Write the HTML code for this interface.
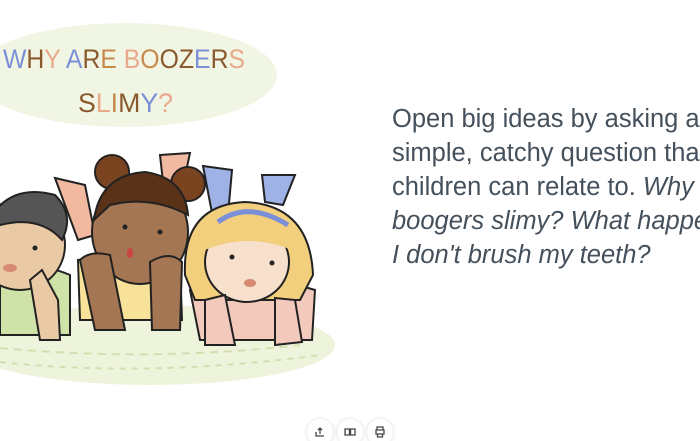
<!DOCTYPE html>
<html><head><meta charset="utf-8"><style>
html,body{margin:0;padding:0;background:#fff;width:700px;height:441px;overflow:hidden;position:relative}
.wrap{position:absolute;left:0;top:0;width:700px;height:441px;overflow:hidden}
.txt{position:absolute;left:392px;top:102px;width:308px;overflow:hidden;font-family:"Liberation Sans",sans-serif;font-size:25.5px;line-height:34px;color:#44505b;white-space:nowrap}
.txt i{font-style:italic}
.btn{position:absolute;top:419px;width:26px;height:26px;border-radius:50%;background:#fff;box-shadow:0 0 4px rgba(0,0,0,.15);}
.btn svg{position:absolute;left:7px;top:7px}
</style></head><body><div class="wrap">
<svg width="350" height="441" style="position:absolute;left:0;top:0" xmlns="http://www.w3.org/2000/svg">
<ellipse cx="125" cy="75" rx="152" ry="52" fill="#f1f5e3"/>
<text x="3" y="68" textLength="242" lengthAdjust="spacingAndGlyphs" font-family="Liberation Sans,sans-serif" font-size="27" fill="#7b8fd8">W<tspan fill="#8a5a2e">H</tspan><tspan fill="#e8a98d">Y</tspan> <tspan fill="#7b8fd8">A</tspan><tspan fill="#8a5a2e">R</tspan><tspan fill="#c68a4d">E</tspan> <tspan fill="#e8a98d">B</tspan><tspan fill="#c68a4d">O</tspan><tspan fill="#8a5a2e">O</tspan><tspan fill="#8a5a2e">Z</tspan><tspan fill="#7b8fd8">E</tspan><tspan fill="#8a5a2e">R</tspan><tspan fill="#e8a98d">S</tspan></text>
<text x="78" y="112" textLength="95" lengthAdjust="spacingAndGlyphs" font-family="Liberation Sans,sans-serif" font-size="27" fill="#8a5a2e">S<tspan fill="#e8a98d">L</tspan><tspan fill="#c68a4d">I</tspan><tspan fill="#8a5a2e">M</tspan><tspan fill="#7b8fd8">Y</tspan><tspan fill="#e8a98d">?</tspan></text>
<!-- rug -->
<ellipse cx="150" cy="345" rx="185" ry="40" fill="#eef3dc"/>
<path d="M0 348 Q150 362 300 345" stroke="#d4dfb0" stroke-width="2" stroke-dasharray="8 6" fill="none"/>
<path d="M0 362 Q150 378 320 355" stroke="#d4dfb0" stroke-width="2" stroke-dasharray="6 6" fill="none"/>
<!-- legs -->
<path d="M55 178 L85 185 L95 235 L78 240 Z" fill="#f0b9a0" stroke="#222" stroke-width="2"/>
<path d="M160 155 L190 153 L180 200 L165 200 Z" fill="#f0b9a0" stroke="#222" stroke-width="2"/>
<path d="M203 166 L232 170 L228 215 L212 213 Z" fill="#9fb2e6" stroke="#222" stroke-width="2"/>
<path d="M262 175 L295 175 L283 205 L265 202 Z" fill="#9fb2e6" stroke="#222" stroke-width="2"/>
<!-- left kid -->
<path d="M0 270 Q35 260 70 275 L70 335 L0 335 Z" fill="#cfe2a8" stroke="#222" stroke-width="2"/>
<circle cx="20" cy="245" r="45" fill="#eac9a5" stroke="#222" stroke-width="2"/>
<path d="M-20 240 Q0 180 55 195 Q75 215 62 240 Q40 215 0 225 Z" fill="#555" stroke="#222" stroke-width="2"/>
<path d="M30 280 L42 270 L58 300 L60 340 L40 340 Z" fill="#eac9a5" stroke="#222" stroke-width="2"/>
<circle cx="35" cy="248" r="2.5" fill="#222"/>
<ellipse cx="10" cy="268" rx="7" ry="4" fill="#d98a75"/>
<!-- middle kid -->
<path d="M78 260 Q130 250 180 262 L182 320 L80 320 Z" fill="#f8e29a" stroke="#222" stroke-width="2"/>
<circle cx="112" cy="172" r="17" fill="#7a4420" stroke="#222" stroke-width="2"/>
<circle cx="188" cy="184" r="17" fill="#7a4420" stroke="#222" stroke-width="2"/>
<ellipse cx="140" cy="232" rx="48" ry="52" fill="#a57653" stroke="#222" stroke-width="2"/>
<path d="M94 220 Q100 175 145 172 Q185 178 188 215 Q150 195 110 205 Z" fill="#5a3218" stroke="#222" stroke-width="2"/>
<circle cx="125" cy="227" r="2.5" fill="#222"/><circle cx="160" cy="232" r="2.5" fill="#222"/>
<ellipse cx="130" cy="253" rx="3" ry="5" fill="#c44"/>
<path d="M80 260 Q90 250 110 255 L125 330 L95 330 Z" fill="#a57653" stroke="#222" stroke-width="2"/>
<path d="M150 262 Q170 250 182 262 L180 330 L152 330 Z" fill="#a57653" stroke="#222" stroke-width="2"/>
<!-- right kid -->
<path d="M190 290 Q250 270 315 290 L312 340 L200 340 Z" fill="#f3c9bb" stroke="#222" stroke-width="2"/>
<path d="M185 275 Q182 205 245 202 Q310 205 313 275 L300 300 L195 300 Z" fill="#f2cf7c" stroke="#222" stroke-width="2"/>
<ellipse cx="247" cy="262" rx="42" ry="40" fill="#f7e0cc" stroke="#222" stroke-width="2"/>
<path d="M205 250 Q210 215 248 215 Q288 215 292 250 Q248 232 205 250 Z" fill="#f2cf7c"/>
<path d="M218 222 Q248 200 288 225" stroke="#7b8fd8" stroke-width="5" fill="none"/>
<circle cx="232" cy="257" r="2.5" fill="#222"/><circle cx="272" cy="263" r="2.5" fill="#222"/>
<ellipse cx="250" cy="283" rx="6" ry="4" fill="#d98a75"/>
<path d="M205 300 L225 295 L235 345 L205 345 Z" fill="#f3c9bb" stroke="#222" stroke-width="2"/>
<path d="M275 298 L295 300 L302 342 L275 345 Z" fill="#f3c9bb" stroke="#222" stroke-width="2"/>
</svg>
<div class="txt">Open big ideas by asking a<br>simple, catchy question that<br>children can relate to. <i>Why are</i><br><i>boogers slimy? What happens if</i><br><i>I don't brush my teeth?</i></div>
<div class="btn" style="left:307px"><svg width="12" height="12" viewBox="0 0 12 12"><path d="M2 6v4h8M6 8V2M4 4l2-2 2 2" stroke="#444" stroke-width="1.3" fill="none"/></svg></div>
<div class="btn" style="left:337px"><svg width="12" height="12" viewBox="0 0 12 12"><path d="M1 3h4.5v6H1zM6.5 3H11v6H6.5z" stroke="#444" stroke-width="1.3" fill="none"/></svg></div>
<div class="btn" style="left:367px"><svg width="12" height="12" viewBox="0 0 12 12"><path d="M3 4V1h6v3M2 4h8v4H2zM3.5 8h5v3h-5z" stroke="#444" stroke-width="1.3" fill="none"/></svg></div>
</div></body></html>
